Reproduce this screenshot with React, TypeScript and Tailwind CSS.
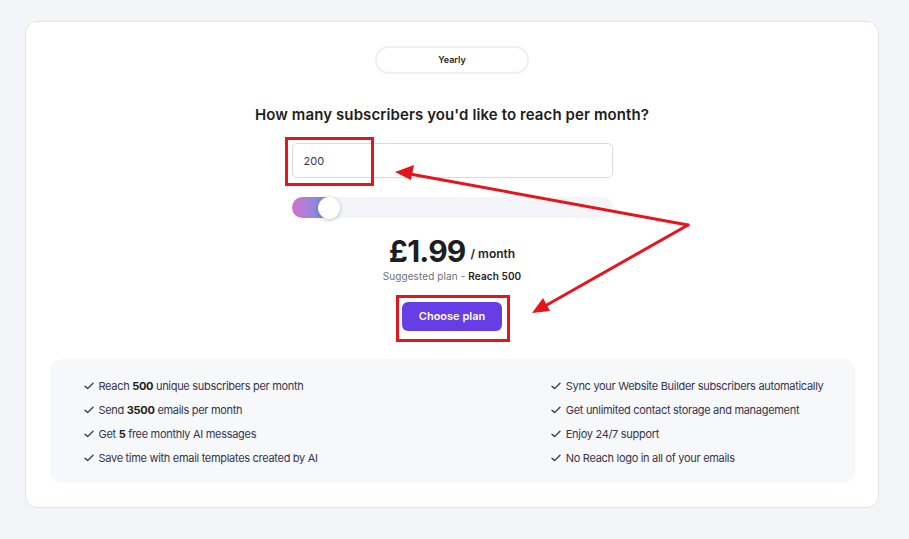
import { useState } from 'react'

const leftFeatures = [
  { pre: 'Reach ', bold: '500', post: ' unique subscribers per month' },
  { pre: 'Send ', bold: '3500', post: ' emails per month' },
  { pre: 'Get ', bold: '5', post: ' free monthly AI messages' },
  { pre: 'Save time with email templates created by AI', bold: '', post: '' },
]

const rightFeatures = [
  'Sync your Website Builder subscribers automatically',
  'Get unlimited contact storage and management',
  'Enjoy 24/7 support',
  'No Reach logo in all of your emails',
]

function CheckIcon() {
  return (
    <svg width="10" height="8" viewBox="0 0 10 8" fill="none" className="shrink-0">
      <path d="M1 4.2 L3.6 6.6 L9 1.2" stroke="#36344d" strokeWidth="1.3" strokeLinecap="round" strokeLinejoin="round" />
    </svg>
  )
}

function Annotations() {
  return (
    <svg className="absolute left-0 top-0 pointer-events-none" width="909" height="539" viewBox="0 0 909 539">
      <rect x="286.5" y="138.5" width="86" height="46" fill="none" stroke="#e8141c" strokeWidth="3" />
      <rect x="397.5" y="296.5" width="111" height="44" fill="none" stroke="#e8141c" strokeWidth="3" />
      <line x1="688" y1="225" x2="410" y2="174" stroke="#e8141c" strokeWidth="3" strokeLinecap="round" />
      <polygon points="395,172 414,165 411,180" fill="#e8141c" />
      <line x1="688" y1="225" x2="545" y2="306" stroke="#e8141c" strokeWidth="3" strokeLinecap="round" />
      <polygon points="532,313 543,298 550,311" fill="#e8141c" />
    </svg>
  )
}

export default function App() {
  const [value, setValue] = useState('200')

  return (
    <div
      className="relative min-h-screen w-full bg-[#f4f5f8] pt-[21px] pl-[25px]"
      style={{ fontFamily: 'Inter, "Noto Sans", sans-serif' }}
    >
      <div className="w-[854px] h-[487px] bg-white rounded-[12px] border border-[#e3e4e8] flex flex-col items-center pt-[24px]">
        <div className="w-[154px] h-[28px] rounded-full border-2 border-[#eef0f3] flex items-center justify-center text-[9px] font-semibold text-[#1d1e20]">
          Yearly
        </div>

        <h1 className="mt-[31px] text-[15px] leading-[20px] font-semibold text-[#1d1e20] tracking-[0.1px]">
          How many subscribers you'd like to reach per month?
        </h1>

        <input
          value={value}
          onChange={(e) => setValue(e.target.value)}
          className="mt-[18px] w-[321px] h-[35px] rounded-[5px] border border-[#d9dade] px-[11px] text-[11px] text-[#36344d] outline-none"
        />

        <div className="mt-[19px] w-[321px] h-[21px] rounded-full bg-[#f4f5f8] flex items-center">
          <div className="h-[21px] w-[38px] rounded-l-full bg-gradient-to-r from-[#d46fcd] to-[#4d91ea]" />
          <div className="-ml-[12px] w-[22px] h-[22px] rounded-full bg-white shadow-[0_1px_4px_rgba(0,0,0,0.25)]" />
        </div>

        <div className="mt-[16px] flex items-center gap-[5px] text-[#1d1e20]">
          <span className="text-[30px] leading-[34px] font-bold tracking-[-0.8px]">£1.99</span>
          <span className="pt-[5px] text-[12px] font-semibold">/ month</span>
        </div>

        <div className="mt-[1px] text-[10px] text-[#6d7081] tracking-[0.1px]">
          Suggested plan - <span className="font-semibold text-[#1d1e20]">Reach 500</span>
        </div>

        <button className="mt-[18px] w-[100px] h-[29px] rounded-[6px] bg-[#673de6] text-white text-[11px] font-semibold">
          Choose plan
        </button>

        <div className="mt-[28px] w-[805px] h-[124px] rounded-[12px] bg-[#f7f8fa] flex justify-between pl-[34px] pr-[31px] pt-[19px] text-[11px] tracking-[-0.3px] text-[#36344d]">
          <ul className="flex flex-col gap-[8px]">
            {leftFeatures.map((f, i) => (
              <li key={i} className="flex items-center gap-[5px] h-[16px]">
                <CheckIcon />
                <span>
                  {f.pre}
                  {f.bold && <b className="font-bold text-[#1d1e20]">{f.bold}</b>}
                  {f.post}
                </span>
              </li>
            ))}
          </ul>
          <ul className="flex flex-col gap-[8px]">
            {rightFeatures.map((f, i) => (
              <li key={i} className="flex items-center gap-[5px] h-[16px]">
                <CheckIcon />
                <span>{f}</span>
              </li>
            ))}
          </ul>
        </div>
      </div>

      <Annotations />
    </div>
  )
}
